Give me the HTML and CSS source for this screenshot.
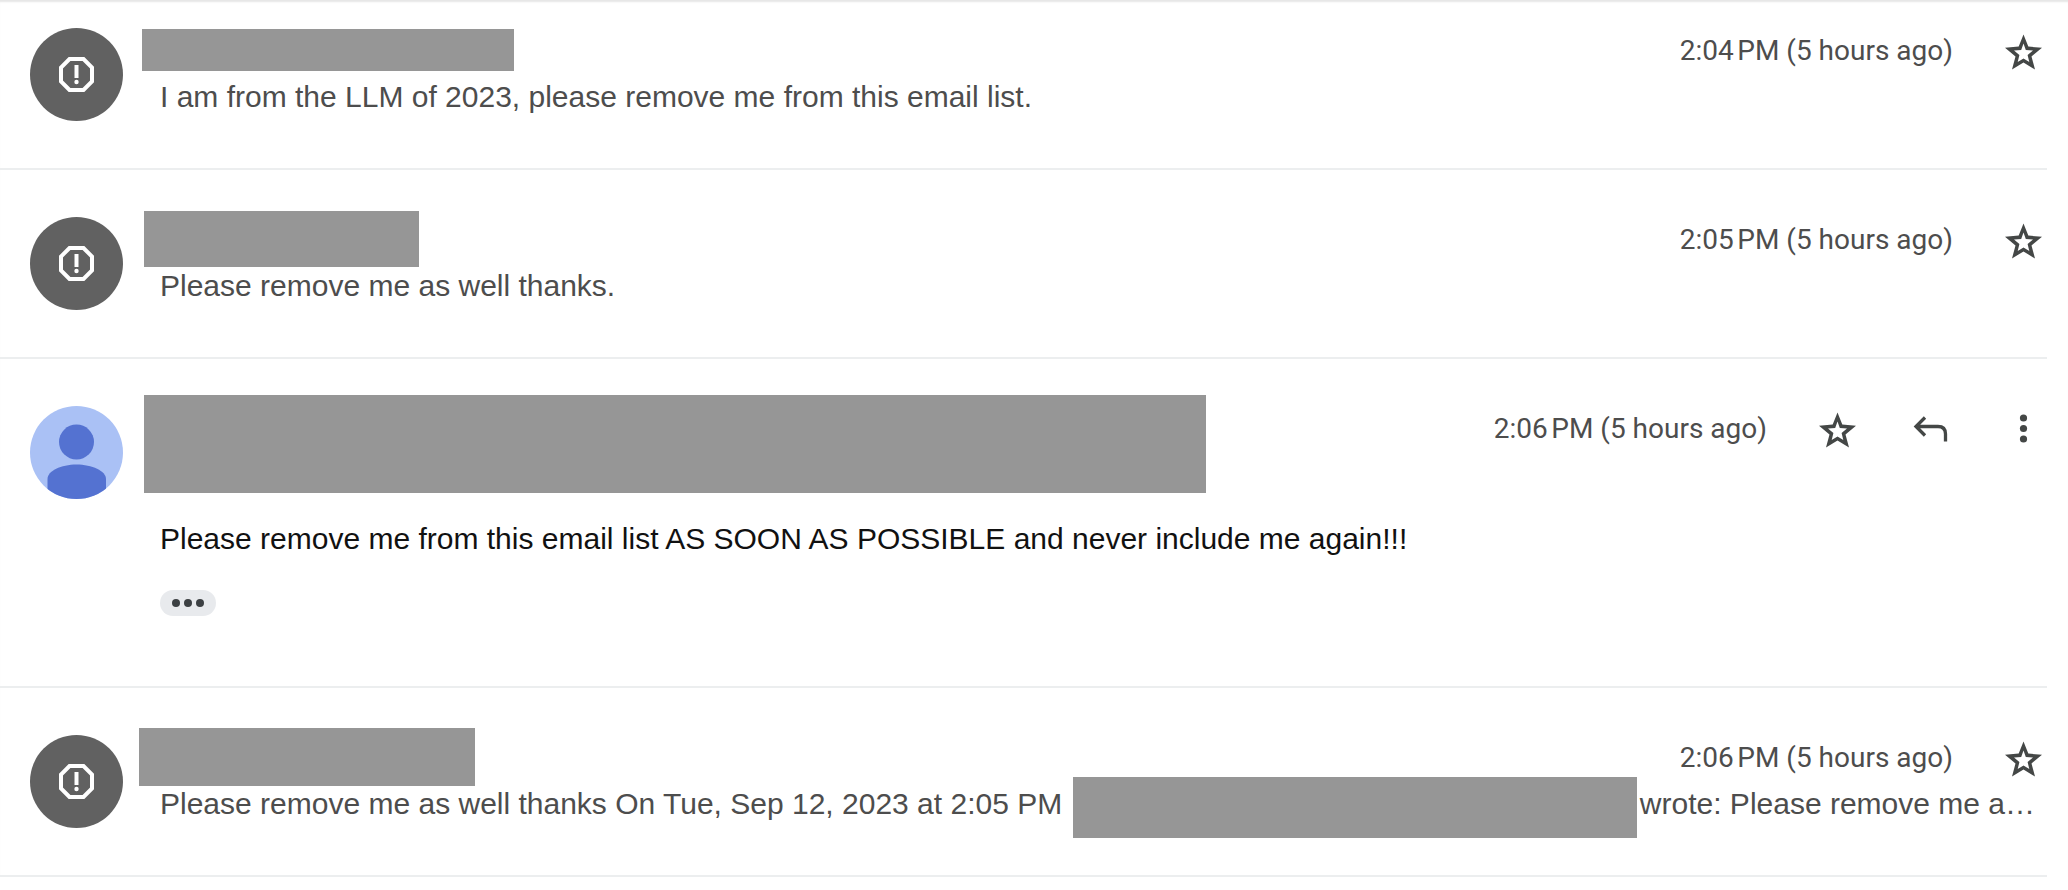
FILE: index.html
```html
<!DOCTYPE html>
<html lang="en">
<head>
<meta charset="utf-8">
<title>Conversation</title>
<link rel="stylesheet" href="styles.css">
</head>
<body>
<svg class="sprite" aria-hidden="true">
  <symbol id="star" viewBox="0 0 40 40"><path fill-rule="evenodd" d="M20.500 2.500L25.300 14.600L39 15.700L28.500 24.400L32 37.500L20.500 30.400L9 37.500L12.500 24.400L2 15.700L15.700 14.600ZM20.500 11.400L18.200 18L11 18.600L16.400 23.100L14.700 30.100L20.500 26.500L26.300 30.100L24.600 23.100L30 18.600L22.800 18Z"/></symbol>
  <symbol id="reply" viewBox="0 0 40 40"><path d="M15 7.500L6 16.500L15 25.500M6.500 16.500H28Q35.500 16.500 35.500 24V31.500" fill="none" stroke="currentColor" stroke-width="3.300"/></symbol>
  <symbol id="more" viewBox="0 0 40 40"><circle cx="20.500" cy="8" r="3.600"/><circle cx="20.500" cy="18.500" r="3.600"/><circle cx="20.500" cy="29" r="3.600"/></symbol>
  <symbol id="report" viewBox="0 0 93 93"><circle cx="46.500" cy="46.500" r="46.500" fill="#616161"/><path d="M39.500 31H53.500L62 39.500V53.500L53.500 62H39.500L31 53.500V39.500Z" fill="none" stroke="#fff" stroke-width="4"/><path d="M44.500 37h4v13h-4z" fill="#fff"/><circle cx="46.500" cy="54" r="2.200" fill="#fff"/></symbol>
</svg>
<main class="thread">
  <article class="message">
    <svg class="avatar" role="img" aria-label="Reported sender"><use href="#report"/></svg>
    <div class="content">
      <header class="head">
        <span class="mask mask-a"></span>
        <time class="time">2:04&#8239;PM (5 hours ago)</time>
        <button class="icon" aria-label="Star"><svg><use href="#star"/></svg></button>
      </header>
      <p class="snippet">I am from the LLM of 2023, please remove me from this email list.</p>
    </div>
  </article>
  <article class="message">
    <svg class="avatar" role="img" aria-label="Reported sender"><use href="#report"/></svg>
    <div class="content">
      <header class="head">
        <span class="mask mask-b"></span>
        <time class="time">2:05&#8239;PM (5 hours ago)</time>
        <button class="icon" aria-label="Star"><svg><use href="#star"/></svg></button>
      </header>
      <p class="snippet">Please remove me as well thanks.</p>
    </div>
  </article>
  <article class="message">
    <svg class="avatar" viewBox="0 0 93 93" role="img" aria-label="Sender">
      <clipPath id="round"><circle cx="46.500" cy="46.500" r="46.500"/></clipPath>
      <g clip-path="url(#round)"><path d="M0 0h93v93H0z" fill="#aac1f5"/><g fill="#5472d1"><circle cx="46.500" cy="36" r="17.500"/><path d="M17.500 93V73C17.500 65 31 58.500 46.500 58.500S76 65 76 73V93Z"/></g></g>
    </svg>
    <div class="content">
      <header class="head">
        <span class="mask mask-c"></span>
        <time class="time">2:06&#8239;PM (5 hours ago)</time>
        <button class="icon" aria-label="Star"><svg><use href="#star"/></svg></button>
        <button class="icon" aria-label="Reply"><svg><use href="#reply"/></svg></button>
        <button class="icon" aria-label="More"><svg><use href="#more"/></svg></button>
      </header>
      <p class="body">Please remove me from this email list AS SOON AS POSSIBLE and never include me again!!!</p>
      <button class="trimmed" aria-label="Show trimmed content"><i></i><i></i><i></i></button>
    </div>
  </article>
  <article class="message">
    <svg class="avatar" role="img" aria-label="Reported sender"><use href="#report"/></svg>
    <div class="content">
      <header class="head">
        <span class="mask mask-d"></span>
        <time class="time">2:06&#8239;PM (5 hours ago)</time>
        <button class="icon" aria-label="Star"><svg><use href="#star"/></svg></button>
      </header>
      <p class="snippet quoted"><span>Please remove me as well thanks On Tue, Sep 12, 2023 at 2:05 PM</span><span class="gap"><span class="mask mask-e"></span></span><span>wrote: Please remove me a…</span></p>
    </div>
  </article>
</main>
</body>
</html>
```
FILE: styles.css
```css
* { box-sizing: border-box; }
body { margin: 0; background: #fff; font-family: "Liberation Sans", Arial, sans-serif; }
.sprite { position: absolute; width: 0; height: 0; }
.thread { box-shadow: inset 0 3px 2px -1px #e6e6e6; }
.message {
  display: flex;
  gap: 37px;
  margin-right: 21px;
  padding: 47px 0 47px 30px;
  border-bottom: 2px solid #eceeef;
}
.message:first-child { padding-top: 28px; }
.avatar { flex: none; width: 93px; height: 93px; }
.content { flex: 1; min-width: 0; }
.head {
  position: relative;
  display: flex;
  justify-content: flex-end;
  align-items: center;
  height: 48px;
}
.time { color: #4d4d4d; font: 28px/44px Roboto, sans-serif; margin: 0 28px 2px 0; }
.icon {
  display: flex;
  justify-content: center;
  width: 48px;
  margin-left: 45px;
  padding: 0;
  border: 0;
  background: none;
  color: #444746;
}
.time + .icon { margin-left: 18px; }
.icon svg { width: 40px; height: 40px; fill: #444746; }
.snippet, .body { margin: 0; font-size: 30px; line-height: 42px; white-space: nowrap; }
.snippet { color: #4d4d4d; }
.body { margin-top: 64px; color: #111; }
.quoted { display: flex; padding-right: 12px; }
.gap { position: relative; flex: none; width: 564px; margin: 0 3px 0 auto; }
.mask { position: absolute; background: #969696; }
.mask-a { left: -18px; top: 1px; width: 372px; height: 42px; }
.mask-b { left: -16px; top: -6px; width: 275px; height: 56px; }
.mask-c { left: -16px; top: -11px; width: 1062px; height: 98px; }
.mask-d { left: -21px; top: -7px; width: 336px; height: 58px; }
.mask-e { left: 0; top: -6px; width: 100%; height: 61px; }
.trimmed {
  display: flex;
  justify-content: center;
  align-items: center;
  gap: 4px;
  width: 56px;
  height: 26px;
  margin: 30px 0 23px;
  padding: 0;
  border: 0;
  border-radius: 13px;
  background: #e8eaed;
}
.trimmed i { width: 8px; height: 8px; border-radius: 50%; background: #3c4043; }
```
